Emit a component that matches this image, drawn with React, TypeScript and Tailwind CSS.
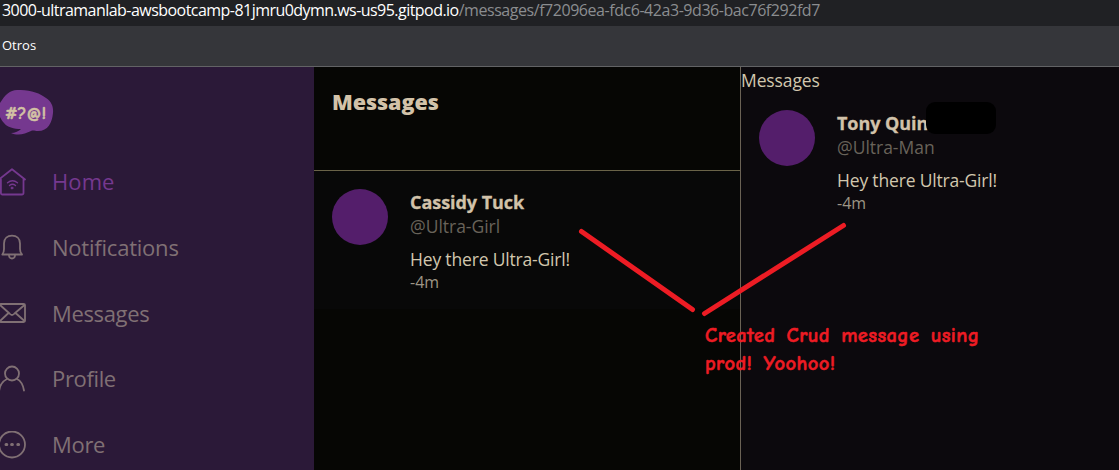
import type { ReactNode } from "react";

function Logo() {
  return (
    <svg width="54" height="46" viewBox="0 0 54 46" className="block shrink-0">
      <path
        d="M0 13C5 5 10 0 17 0C29-.4 40 3 46 8C52 12 53.500 17 53 23C52 33 48 41 38 41C35 41 33 40 31 41C25 44 18 46 11 43C15 43 19 41 21 39C14 39 7 37 4 33C2 31 1 29 0 27Z"
        fill="#75388f"
      />
      <text x="5" y="28.500" fontSize="18" fontWeight="700" fontFamily="'Comic Sans MS', 'Comic Neue', cursive" fill="#d2c2a4" stroke="#d2c2a4" strokeWidth="0.5" textLength="41" lengthAdjust="spacingAndGlyphs">
        #?@!
      </text>
    </svg>
  );
}

function Icon({ children }: { children: ReactNode }) {
  return (
    <svg width="28" height="28" viewBox="0 0 28 28" fill="none" stroke="currentColor" strokeWidth="1.8" strokeLinecap="round" strokeLinejoin="round" className="block shrink-0">
      {children}
    </svg>
  );
}

const homeIcon = (
  <Icon>
    <path d="M.9 11.500V25a1.500 1.500 0 0 0 1.500 1.500H22a1.500 1.500 0 0 0 1.500-1.500V11.500M-1 11.500 12 1.200 25 11.500" />
    <path d="M7.500 14.800Q12.500 10.800 17.500 14.800M9.500 17.500Q12.500 15 15.500 17.500" strokeWidth="1.400" />
    <circle cx="12" cy="20" r="1" fill="currentColor" strokeWidth=".8" />
  </Icon>
);
const bellIcon = (
  <Icon>
    <path d="M2.300 20.500Q4 18.500 4 15V9.500C4 4.500 7.500 1.700 12 1.700S20 4.500 20 9.500V15Q20 18.500 22 20.500Z" />
    <path d="M9 21.500Q9.300 24.500 12 24.500T15 21.500" />
  </Icon>
);
const mailIcon = (
  <Icon>
    <rect x="-1" y="5" width="26" height="18" rx="1.500" />
    <path d="M0 6 9.500 14.500Q12 17.500 14.500 14.500L24.500 6M0 22 8.500 14M24.500 22 15.500 14" />
  </Icon>
);
const userIcon = (
  <Icon>
    <circle cx="12" cy="8.500" r="7" />
    <path d="M-.8 25.500C0 19.500 3.500 15.700 7 14M24 25.500C23 19.500 20.500 15.700 17 14" />
  </Icon>
);
const moreIcon = (
  <Icon>
    <circle cx="12" cy="13.500" r="13" />
    <path d="M6 13.500h.8M11.600 13.500h.8M17.800 13.500h.8" strokeWidth="3" />
  </Icon>
);

const navItems = [
  { label: "Home", icon: homeIcon, style: "text-[#75388f] tracking-[0.1px]" },
  { label: "Notifications", icon: bellIcon, style: "text-[#807074] tracking-[-0.22px]" },
  { label: "Messages", icon: mailIcon, style: "text-[#807074] tracking-[-0.35px]" },
  { label: "Profile", icon: userIcon, style: "text-[#807074] tracking-[-0.35px]" },
  { label: "More", icon: moreIcon, style: "text-[#807074] tracking-[-0.3px]" },
];

function Message({ name, handle }: { name: string; handle: string }) {
  return (
    <div className="flex gap-[22px] pl-[18px] whitespace-nowrap">
      <div className="size-[56px] shrink-0 rounded-full bg-[#541e6b]" />
      <div className="pt-px text-[17.5px] leading-6">
        <div className="text-[18px] font-bold text-[#d2c2a9] tracking-[-0.05px] [-webkit-text-stroke:0.3px_#d2c2a9]">{name}</div>
        <div className="text-[#69635a] tracking-[-0.02px]">{handle}</div>
        <div className="mt-[9px] text-[#d2c7ae] tracking-[-0.17px]">Hey there Ultra-Girl!</div>
        <div className="text-[16px] leading-[22px] text-[#9d9585]">-4m</div>
      </div>
    </div>
  );
}

export default function App() {
  return (
    <div className="relative flex h-[470px] w-[1119px] flex-col overflow-hidden bg-[#0c090d] font-['Open_Sans',sans-serif]">
      <div className="flex h-[26px] shrink-0 items-start bg-[#202124] pl-[2px] text-[16px] leading-[20px] whitespace-nowrap">
        <span className="text-white tracking-[-0.54px]">3000-ultramanlab-awsbootcamp-81jmru0dymn.ws-us95.gitpod.io</span>
        <span className="text-[#8b8d90] tracking-[-0.45px]">/messages/f72096ea-fdc6-42a3-9d36-bac76f292fd7</span>
      </div>
      <div className="flex h-[41px] shrink-0 items-center border-b border-[#626365] bg-[#35363a] pl-[2px] text-[13px] text-white">
        <span>Otros</span>
      </div>
      <div className="flex min-h-0 flex-1">
        <nav className="flex w-[314px] shrink-0 flex-col bg-[#2b1938] pt-[23px]">
          <Logo />
          <div className="mt-[13px] flex flex-col">
            {navItems.map((item) => (
              <div key={item.label} className={`flex h-[65.7px] shrink-0 items-center gap-6 text-[22px] ${item.style}`}>
                {item.icon}
                <span>{item.label}</span>
              </div>
            ))}
          </div>
        </nav>
        <section className="flex w-[427px] shrink-0 flex-col border-r border-[#6b6255] bg-[#060604]">
          <header className="h-[104px] border-b border-[#6a6348] pt-[20px] pl-[18px] text-[21.5px] leading-[30px] font-extrabold text-[#d2c2a9]">
            <span className="tracking-[-0.05px]">Messages</span>
          </header>
          <div className="h-[138px] bg-[#080808] pt-[18px]">
            <Message name="Cassidy Tuck" handle="@Ultra-Girl" />
          </div>
        </section>
        <section className="flex flex-1 flex-col bg-[#0c090d]">
          <div className="h-[42.6px] text-[17.5px] leading-[27px] text-[#d2c7ae]">
            <span className="tracking-[-0.1px]">Messages</span>
          </div>
          <Message name="Tony Quin" handle="@Ultra-Man" />
        </section>
      </div>

      <div className="absolute top-[102px] left-[926px] h-[32px] w-[70px] rounded-[9px] bg-black" />
      <svg className="absolute inset-0" width="1119" height="470" viewBox="0 0 1119 470" stroke="#ed1c24" strokeWidth="5" strokeLinecap="round">
        <path d="M581.500 231.500 692.500 309.500M704.500 313.500 843.500 225.500" />
      </svg>
      <div className="absolute top-[322px] left-[705px] font-['Comic_Sans_MS','Comic_Neue',cursive] text-[20.5px] leading-[28px] font-bold whitespace-nowrap text-[#ed1c24] [-webkit-text-stroke:0.5px_#ed1c24]">
        <div className="tracking-[0.4px] [word-spacing:3.5px]">Created Crud message using</div>
        <div className="tracking-[0.4px] [word-spacing:3.5px]">prod! Yoohoo!</div>
      </div>
    </div>
  );
}
